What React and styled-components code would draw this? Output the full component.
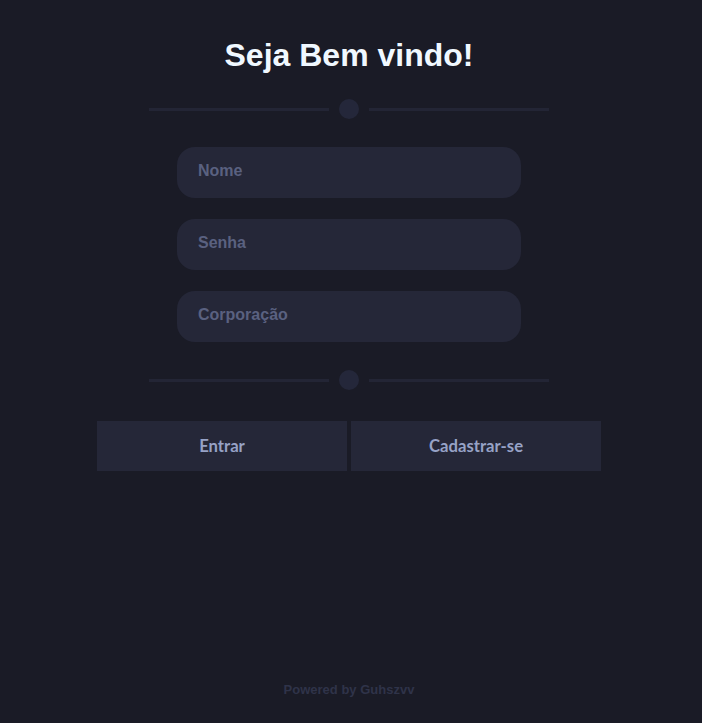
import React from "react";
import styled, { createGlobalStyle } from "styled-components";

const GlobalStyle = createGlobalStyle`
  body {
    margin: 0;
    background: #1a1b26;
    font-family: "Liberation Sans", Arial, sans-serif;
  }
`;

export default function App() {
    return (
        <>
            <GlobalStyle />
            <Page>
                <Title>Seja Bem vindo!</Title>
                <Divider $top={25}>
                    <span className="line" />
                    <span className="dot" />
                    <span className="line" />
                </Divider>
                <Form>
                    <Input placeholder="Nome" />
                    <Input placeholder="Senha" type="password" />
                    <Input placeholder="Corporação" />
                </Form>
                <Divider $top={28}>
                    <span className="line" />
                    <span className="dot" />
                    <span className="line" />
                </Divider>
                <Actions>
                    <Button>Entrar</Button>
                    <Button>Cadastrar-se</Button>
                </Actions>
                <Footer>Powered by Guhszvv</Footer>
            </Page>
        </>
    );
}

const Page = styled.div`
  box-sizing: border-box;
  min-height: 100vh;
  padding: 37px 4px 26px 0;
  display: flex;
  flex-direction: column;
  align-items: center;
`;

const Title = styled.h1`
  margin: 0;
  font-size: 32px;
  font-weight: bold;
  color: #f0f8ff;
  line-height: 37px;
`;

const Divider = styled.div`
  display: flex;
  align-items: center;
  gap: 10px;
  margin: ${(p) => p.$top}px 0 28px;
  .line {
    width: 180px;
    height: 3px;
    background: #232535;
  }
  .dot {
    width: 20px;
    height: 20px;
    border-radius: 50%;
    background: #24273a;
  }
`;

const Form = styled.div`
  display: flex;
  flex-direction: column;
  gap: 21px;
`;

const Input = styled.input`
  box-sizing: border-box;
  width: 344px;
  height: 51px;
  border: none;
  outline: none;
  border-radius: 18px;
  background: #252738;
  padding: 0 21px 4px;
  font-family: "Liberation Sans", Arial, sans-serif;
  font-size: 16px;
  font-weight: bold;
  color: #c0caf5;
  &::placeholder {
    color: #5a6180;
  }
`;

const Actions = styled.div`
  display: flex;
  gap: 4px;
  margin-top: 3px;
`;

const Button = styled.button`
  width: 250px;
  height: 50px;
  border: none;
  background: #252738;
  color: #97a2c6;
  font-family: Lato, "Open Sans", sans-serif;
  font-size: 16.7px;
  font-weight: bold;
  cursor: pointer;
`;

const Footer = styled.footer`
  margin-top: auto;
  font-size: 13px;
  font-weight: bold;
  color: #2f3349;
`;
